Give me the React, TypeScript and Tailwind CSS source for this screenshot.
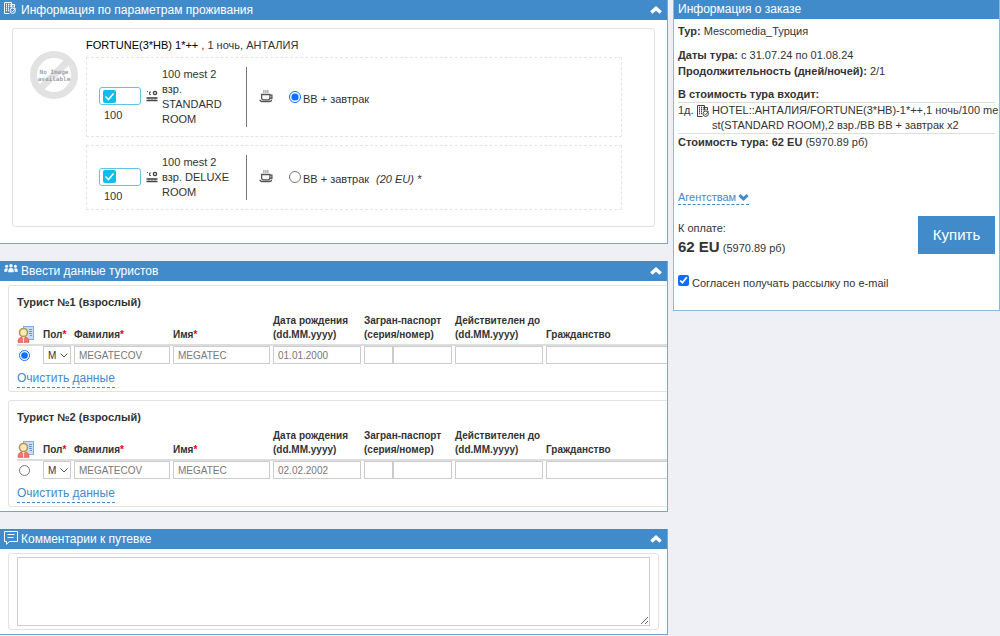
import type { ReactNode } from "react";

type Room = {
  id: string;
  name: string[];
  meal: string;
  extra?: string;
  selected: boolean;
};

type Tourist = {
  id: number;
  surname: string;
  name: string;
  birthday: string;
  selected: boolean;
};

const rooms: Room[] = [
  {
    id: "standard",
    name: ["100 mest 2", "взр.", "STANDARD", "ROOM"],
    meal: "BB + завтрак",
    selected: true,
  },
  {
    id: "deluxe",
    name: ["100 mest 2", "взр. DELUXE", "ROOM"],
    meal: "BB + завтрак",
    extra: "(20 EU) *",
    selected: false,
  },
];

const tourists: Tourist[] = [
  { id: 1, surname: "MEGATECOV", name: "MEGATEC", birthday: "01.01.2000", selected: true },
  { id: 2, surname: "MEGATECOV", name: "MEGATEC", birthday: "02.02.2002", selected: false },
];

const ChevronIcon = ({ className }: { className?: string }) => (
  <svg viewBox="0 0 12 8" className={className} fill="none" stroke="currentColor" strokeWidth="3.4">
    <path d="M1.300 6.600L6 2.400l4.700 4.200" />
  </svg>
);

const HotelIcon = ({ className }: { className?: string }) => (
  <svg viewBox="0 0 12 12" className={className} fill="none" stroke="currentColor">
    <path d="M.5 11.500V.5h7v5M.5 11.500h5M7.500 2.500h3v3" />
    <path d="M2 2.500h1M4 2.500h1M5.800 2.500h1M2 4.500h1M4 4.500h1M5.800 4.500h1M2 6.500h1M4 6.500h1M2 8.500h1M4 8.500h1M8.500 4.500h1" strokeWidth="1.300" />
    <circle cx="8.700" cy="8.700" r="2.700" />
    <path d="M7.300 8.500l1.300 1.300 2.900-3.500" />
  </svg>
);

const PeopleIcon = () => (
  <svg viewBox="0 0 14 10" className="mt-px h-2.5 w-3.5" fill="currentColor">
    <circle cx="2.600" cy="2.300" r="1.500" />
    <circle cx="7" cy="1.800" r="1.700" />
    <circle cx="11.400" cy="2.300" r="1.500" />
    <path d="M.2 7.800c0-2.400.7-3.500 2.200-3.500.8 0 1.300.2 1.600.7-.6.8-.8 1.700-.8 2.800z" />
    <path d="M13.800 7.800c0-2.400-.7-3.500-2.200-3.500-.8 0-1.300.2-1.600.7.6.8.8 1.700.8 2.800z" />
    <path d="M4.200 8.300c0-3 .8-4.400 2.800-4.400s2.800 1.400 2.800 4.400z" />
  </svg>
);

const CommentIcon = () => (
  <svg viewBox="0 0 14 14" className="h-3.5 w-3.5" fill="none" stroke="currentColor" strokeWidth="1">
    <path d="M.5.5h13v10H5.500l-3 2.800v-2.800h-2z" />
    <path d="M3.500 3.500h7M3.500 6.500h6" />
  </svg>
);

const NoImage = () => (
  <svg viewBox="0 0 48 48" className="h-12 w-12 shrink-0" role="img" aria-label="No Image available">
    <circle cx="24" cy="24" r="20.500" fill="none" stroke="#e2e2e2" strokeWidth="7" />
    <path d="M38 10L10 38" stroke="#e2e2e2" strokeWidth="7" />
    <g fill="#a3a3a3" fontFamily="'DejaVu Sans Mono', monospace" fontSize="6" fontWeight="bold" textAnchor="middle">
      <text x="24" y="22.500">No Image</text>
      <text x="24" y="29.500">available</text>
    </g>
  </svg>
);

const ClimateIcon = () => (
  <svg viewBox="0 0 12 12" className="mb-0.5 h-3 w-3 shrink-0" fill="none" stroke="#444">
    <path d="M1 1.500h1M5 2H3.500v2.500H5" strokeWidth="0.900" />
    <circle cx="9" cy="3" r="1.600" strokeWidth="1.400" />
    <path d="M.5 8h11M.5 10.500h11" strokeWidth="1.500" />
    <path d="M3 7v4M6 7v4M9 7v4" strokeWidth="0.600" />
  </svg>
);

const CupIcon = () => (
  <svg viewBox="0 0 14 14" className="mb-[3px] h-3.5 w-3.5 shrink-0" fill="none" stroke="#555" strokeWidth="1.300">
    <path d="M2.600 5.500h8.300v3.300c0 1.200-.8 2-2 2H4.600c-1.200 0-2-.8-2-2z" />
    <path d="M11 6.200h1.900v3.200H11M1 10.700c0 1.200.8 1.800 2 1.800h7.500c1.200 0 2-.6 2-1.800" />
    <path d="M4.500 1l.8 1-.8 1 .8 1M6.500 1l.8 1-.8 1 .8 1M8.500 1l.8 1-.8 1 .8 1" strokeWidth="0.700" />
  </svg>
);

const TouristIcon = () => (
  <svg viewBox="0 0 17 17" className="h-[17px] w-[17px]">
    <rect x="6.500" y=".5" width="10" height="13" fill="#c9dcf6" stroke="#86abe0" />
    <path d="M12 3.500h3M12 5.500h3M12 7.500h3M13 9.500h2" stroke="#6b95d6" />
    <path d="M1 16.300c0-3.800 1.800-5.500 5.500-5.500s5.500 1.700 5.500 5.500z" fill="#f3766e" stroke="#e0554f" strokeWidth="0.800" />
    <path d="M4.700 10.500l1.800 2.500 1.800-2.500z" fill="#fff" />
    <path d="M6.500 13v3.500" stroke="#fff" strokeWidth="0.800" />
    <circle cx="6.500" cy="6.500" r="4" fill="#fbe9bb" stroke="#b8964c" strokeWidth="1.600" />
  </svg>
);

const Panel = (props: { title: string; icon: ReactNode; children: ReactNode }) => (
  <section className="overflow-hidden border-r border-b border-[#73a8d6] bg-white">
    <header className="flex h-5 items-center bg-[#428bca] pr-[5px] pl-1 text-white">
      <span className="flex h-full w-[17px] items-start pt-0.5">{props.icon}</span>
      <h2 className="flex-1 text-[12px]">{props.title}</h2>
      <button type="button" aria-label="Свернуть">
        <ChevronIcon className="h-2 w-3" />
      </button>
    </header>
    {props.children}
  </section>
);

const RoomRow = ({ room }: { room: Room }) => (
  <div className="flex items-center border border-dashed border-[#e4e4e4] py-[9px] pl-3">
    <label className="-my-1 w-[42px] pt-4">
      <span className="grid h-[18px] items-center rounded-[3px] border border-[#5cc4e8] px-[3px]">
        <input
          type="checkbox"
          defaultChecked
          className="col-start-1 row-start-1 h-[13px] w-[13px] appearance-none rounded-xs bg-[#0dbdf0]"
        />
        <svg
          viewBox="0 0 13 13"
          className="pointer-events-none col-start-1 row-start-1 h-[13px] w-[13px]"
          fill="none"
          stroke="#fff"
          strokeWidth="1.600"
        >
          <path d="M2.500 6.500l3 3 5-6" />
        </svg>
      </span>
      <span className="block pt-[3px] pl-[5px]">100</span>
    </label>
    <div className="flex w-[105px] items-center gap-1 pl-[5px]">
      <ClimateIcon />
      <p>
        {room.name.map((line) => (
          <span key={line} className="block whitespace-nowrap">
            {line}
          </span>
        ))}
      </p>
    </div>
    <div className="flex items-center self-stretch border-l border-[#777] pl-3">
      <CupIcon />
      <label className="flex items-start pl-4">
        <input
          type="radio"
          name="meal"
          defaultChecked={room.selected}
          className="mt-[3px] h-3 w-3 accent-[#0d6efd]"
        />
        <span className="pt-1 pl-0.5">
          {room.meal}
          {room.extra && <i className="pl-[7px]">{room.extra}</i>}
        </span>
      </label>
    </div>
  </div>
);

const inputClass = "block h-[18px] w-full border border-[#ccc] bg-white px-1 text-[10px] text-[#777]";

const Required = () => <span className="text-red-600">*</span>;

const TouristCard = ({ tourist }: { tourist: Tourist }) => (
  <div className="w-[720px] rounded-[3px] border border-[#e2e2e2] pt-2 pb-[3px] pl-2">
    <h3 className="text-[11px] leading-4 font-bold">Турист №{tourist.id} (взрослый)</h3>
    <table className="mt-[3px] w-full table-fixed border-collapse">
      <thead>
        <tr className="h-8 border-b-2 border-[#ddd] text-left align-bottom text-[10px] leading-[14px]">
          <th className="w-[26px] pb-px">
            <TouristIcon />
          </th>
          <th className="w-[31px] pb-0.5">
            Пол
            <Required />
          </th>
          <th className="w-[99px] pb-0.5">
            Фамилия
            <Required />
          </th>
          <th className="w-[100px] pb-0.5">
            Имя
            <Required />
          </th>
          <th className="w-[91px] pb-0.5 whitespace-nowrap">
            Дата рождения
            <br />
            (dd.MM.yyyy)
          </th>
          <th className="w-[91px] pb-0.5 whitespace-nowrap">
            Загран-паспорт
            <br />
            (серия/номер)
          </th>
          <th className="w-[91px] pb-0.5 whitespace-nowrap">
            Действителен до
            <br />
            (dd.MM.yyyy)
          </th>
          <th className="pb-0.5">Гражданство</th>
        </tr>
      </thead>
      <tbody>
        <tr>
          <td className="pb-px pl-0.5">
            <input
              type="radio"
              name="customer"
              aria-label="Заказчик"
              defaultChecked={tourist.selected}
              className="block h-[11px] w-[11px] accent-[#0d6efd]"
            />
          </td>
          <td className="pr-[3px] pb-px">
            <span className="relative block">
              <select
                aria-label="Пол"
                className="block h-[18px] w-full appearance-none border border-[#ccc] bg-white pl-1 text-[10px]"
              >
                <option>М</option>
                <option>Ж</option>
              </select>
              <svg
                viewBox="0 0 8 5"
                className="pointer-events-none absolute top-[7px] right-[3px] h-[5px] w-2"
                fill="none"
                stroke="#555"
              >
                <path d="M.5.5L4 4 7.500.5" />
              </svg>
            </span>
          </td>
          <td className="pr-[3px] pb-px">
            <input aria-label="Фамилия" defaultValue={tourist.surname} className={inputClass} />
          </td>
          <td className="pr-[3px] pb-px">
            <input aria-label="Имя" defaultValue={tourist.name} className={inputClass} />
          </td>
          <td className="pr-[3px] pb-px">
            <input aria-label="Дата рождения" defaultValue={tourist.birthday} className={inputClass} />
          </td>
          <td className="pr-[3px] pb-px">
            <span className="grid grid-cols-[1fr_2fr]">
              <input aria-label="Серия паспорта" className={inputClass} />
              <input aria-label="Номер паспорта" className={inputClass} />
            </span>
          </td>
          <td className="pr-[3px] pb-px">
            <input aria-label="Действителен до" className={inputClass} />
          </td>
          <td className="pb-px">
            <input aria-label="Гражданство" className={inputClass} />
          </td>
        </tr>
      </tbody>
    </table>
    <a
      href="#clear"
      className="mt-[5px] inline-block border-b border-dashed border-[#428bca] pb-px text-[12px] leading-4 text-[#428bca]"
    >
      Очистить данные
    </a>
  </div>
);

const OrderInfo = () => (
  <aside className="w-[327px] shrink-0 border-x border-b border-[#8db9de] bg-white pb-[19px]">
    <h2 className="h-[19px] bg-[#428bca] pl-1 text-[12px] leading-[19px] text-white">
      Информация о заказе
    </h2>
    <div className="px-1 pt-1 leading-4">
      <p>
        <b>Тур:</b> Mescomedia_Турция
      </p>
      <p className="pt-2">
        <b>Даты тура:</b> с 31.07.24 по 01.08.24
      </p>
      <p>
        <b>Продолжительность (дней/ночей):</b> 2/1
      </p>
      <p className="pt-[7px] font-bold">В стоимость тура входит:</p>
      <div className="flex border-y border-[#ddd] leading-[15px]">
        <span className="w-[19px] shrink-0">1д.</span>
        <HotelIcon className="mt-0.5 h-3 w-3 shrink-0 text-[#444]" />
        <p className="pl-[3px] whitespace-nowrap">
          HOTEL::АНТАЛИЯ/FORTUNE(3*HB)-1*++,1 ночь/100 me
          <br />
          st(STANDARD ROOM),2 взр./BB BB + завтрак x2
        </p>
      </div>
      <p>
        <b>Стоимость тура: 62 EU</b> (5970.89 рб)
      </p>
      <a
        href="#agency"
        className="mt-10 inline-flex items-center gap-0.5 border-b border-dashed border-[#428bca] leading-[14px] text-[#428bca]"
      >
        Агентствам
        <ChevronIcon className="h-[7px] w-[11px] rotate-180" />
      </a>
      <div className="flex items-start justify-between pt-[11px]">
        <div className="pt-1">
          <p>К оплате:</p>
          <p className="leading-[22px]">
            <b className="text-[15px]">62 EU</b> (5970.89 рб)
          </p>
        </div>
        <button type="button" className="h-[38px] w-[77px] bg-[#428bca] text-[15px] text-white">
          Купить
        </button>
      </div>
      <label className="flex items-start pt-4">
        <input type="checkbox" defaultChecked className="h-[11px] w-[11px] accent-[#0d6efd]" />
        <span className="pl-[3px]">Согласен получать рассылку по e-mail</span>
      </label>
    </div>
  </aside>
);

export default function App() {
  return (
    <main className="flex min-h-screen items-start gap-[5px] bg-[#eff0f5] font-['Liberation_Sans',Arial,sans-serif] text-[11px] leading-[15px] text-[#333]">
      <div className="flex min-w-0 flex-1 flex-col gap-[17px]">
        <Panel
          title="Информация по параметрам проживания"
          icon={<HotelIcon className="h-3 w-3" />}
        >
          <div className="mx-3 mt-2 mb-4 flex items-start rounded-[3px] border border-[#e2e2e2] pt-[9px] pr-8 pb-4 pl-[17px]">
            <div className="pt-[13px] pr-2">
              <NoImage />
            </div>
            <div className="flex-1">
              <p className="pb-1">
                <span className="text-black">FORTUNE(3*HB) 1*++</span> , 1 ночь, АНТАЛИЯ
              </p>
              <div className="flex flex-col gap-2">
                {rooms.map((room) => (
                  <RoomRow key={room.id} room={room} />
                ))}
              </div>
            </div>
          </div>
        </Panel>

        <Panel title="Ввести данные туристов" icon={<PeopleIcon />}>
          <div className="flex flex-col gap-2 pt-1 pb-1 pl-2">
            {tourists.map((tourist) => (
              <TouristCard key={tourist.id} tourist={tourist} />
            ))}
          </div>
        </Panel>

        <Panel title="Комментарии к путевке" icon={<CommentIcon />}>
          <div className="mx-2 my-1 rounded-[3px] border border-[#e2e2e2] px-2 py-[3px]">
            <textarea
              aria-label="Комментарии к путевке"
              className="block h-[69px] w-full border border-[#ccc] bg-white p-1"
            />
          </div>
        </Panel>
      </div>
      <OrderInfo />
    </main>
  );
}
